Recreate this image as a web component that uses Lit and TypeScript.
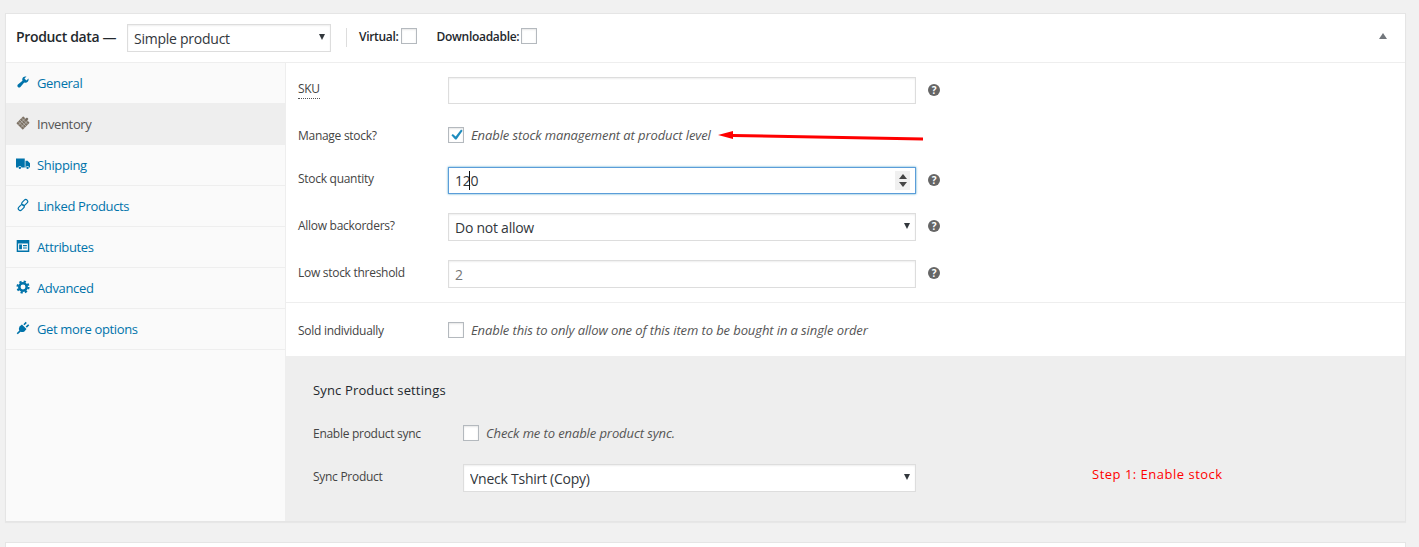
import { LitElement, css, html, svg } from "lit";
import { customElement } from "lit/decorators.js";

interface Tab {
  label: string;
  icon: unknown;
  active?: boolean;
}

const wrench = svg`<path d="M16.68 9.77c-1.34 1.34-3.3 1.67-4.95.99l-5.41 6.52c-.99.99-2.59.99-3.58 0s-.99-2.59 0-3.57l6.52-5.42c-.68-1.65-.35-3.61.99-4.95 1.28-1.28 3.12-1.62 4.72-1.06l-2.89 2.89 2.82 2.82 2.86-2.87c.53 1.58.18 3.39-1.08 4.67z"/>`;
const tag = svg`<g transform="rotate(45 10 10)"><rect x="3.500" y="3" width="13" height="14" rx="1" fill="#7d7264"/><path d="M3.500 6.500h13M3.500 10h13M3.500 13.500h13M7.500 3v14M12.500 3v14" stroke="#d8d8d8" stroke-width=".7"/><rect x="8.500" y=".5" width="3" height="3" fill="#6b6257"/></g>`;
const truck = svg`<path d="M0 2h12.500v13H7.800a2.300 2.300 0 0 0-4.600 0H0zM13.500 5.500h3L20 9v6h-1.200a2.300 2.300 0 0 0-4.600 0h-.7z"/><circle cx="5.500" cy="15.500" r="1.700"/><circle cx="16.500" cy="15.500" r="1.700"/>`;
const link = svg`<g fill="none" stroke="currentColor" stroke-width="1.700"><rect x="9.700" y="1.600" width="5.600" height="9.600" rx="2.800" transform="rotate(45 12.500 6.400)"/><rect x="4.700" y="8.800" width="5.600" height="9.600" rx="2.800" transform="rotate(45 7.500 13.600)"/></g>`;
const attrs = svg`<path fill-rule="evenodd" d="M1 1.500h18v17H1zM3 6.500v10h14v-10z"/><path d="M4.500 8h4v6.500h-4zM10 8.500h5.500v1.700H10zM10 12h5.500v1.700H10z"/>`;
const gear = svg`<circle cx="10" cy="10" r="5.300" fill="none" stroke="currentColor" stroke-width="3.600"/><circle cx="10" cy="10" r="7.900" fill="none" stroke="currentColor" stroke-width="3" stroke-dasharray="3.200 3"/>`;
const plug = svg`<path d="M8.500 5 L15 11.500 L12 15 Q9 16.500 6.500 15.200 L2.500 19 L1 17.500 L4.800 13.500 Q3.500 11 5 8zM10.500 4.500 L13.800 1 L15.500 2.700 L12.200 6.200zM13.800 7.800 L17.300 4.500 L19 6.200 L15.500 9.500z"/>`;

const TABS: Tab[] = [
  { label: "General", icon: wrench },
  { label: "Inventory", icon: tag, active: true },
  { label: "Shipping", icon: truck },
  { label: "Linked Products", icon: link },
  { label: "Attributes", icon: attrs },
  { label: "Advanced", icon: gear },
  { label: "Get more options", icon: plug },
];

@customElement("app-root")
export class AppRoot extends LitElement {
  static styles = css`
    :host {
      display: block;
      height: 547px;
      overflow: hidden;
      position: relative;
      background: #f1f1f1;
      font-family: "Open Sans", sans-serif;
      font-size: 12px;
      letter-spacing: -0.28px;
      color: #444;
    }
    * {
      box-sizing: border-box;
    }
    .panel {
      margin: 13px 13px 0 5px;
      height: 509px;
      background: #fff;
      border: 1px solid #e5e5e5;
      box-shadow: 0 1px 1px rgba(0, 0, 0, 0.04);
      display: flex;
      flex-direction: column;
    }
    .next {
      margin: 20px 13px 0 5px;
      height: 20px;
      background: #fff;
      border: 1px solid #e5e5e5;
    }
    .head {
      height: 49px;
      flex: none;
      border-bottom: 1px solid #eee;
      display: flex;
      align-items: center;
      padding: 0 0 4px 10px;
      color: #23282d;
    }
    .title {
      font-size: 14px;
      font-weight: 600;
      letter-spacing: -0.35px;
      width: 111px;
      flex: none;
    }
    .field.type {
      width: 204px;
      margin-top: 4px;
    }
    .sep {
      width: 1px;
      height: 19px;
      margin: 3px 12px 0 15px;
      background: #ddd;
    }
    .opt {
      font-weight: 600;
      letter-spacing: -0.3px;
      display: flex;
      align-items: center;
      gap: 2px;
      margin-right: 20px;
    }
    .collapse {
      margin-left: auto;
      margin-right: 18px;
      width: 0;
      height: 0;
      border-left: 4.500px solid transparent;
      border-right: 4.500px solid transparent;
      border-bottom: 6px solid #72777c;
    }
    .body {
      flex: 1;
      display: flex;
      min-height: 0;
    }
    .tabs {
      width: 280px;
      flex: none;
      background: #fafafa;
      border-right: 1px solid #eee;
      margin: 0;
      padding: 0;
      list-style: none;
    }
    .tab {
      height: 41px;
      border-bottom: 1px solid #eee;
      display: flex;
      align-items: center;
      padding: 0 0 0 10px;
      color: #0073aa;
      font-size: 13px;
      letter-spacing: -0.35px;
    }
    .tab.active {
      background: #eee;
      color: #555;
    }
    .tab svg {
      width: 14px;
      height: 14px;
      margin: -3px 7px 0 0;
      fill: #0073aa;
      color: #0073aa;
      flex: none;
    }
    .tab.active svg {
      fill: #777;
    }
    .main {
      flex: 1;
      display: flex;
      flex-direction: column;
      min-width: 0;
    }
    .group {
      padding: 14px 0 14px 12px;
      border-bottom: 1px solid #eee;
      display: flex;
      flex-direction: column;
    }
    .single {
      height: 53px;
      padding: 0 0 0 12px;
      display: flex;
      flex-direction: column;
      justify-content: center;
    }
    .row {
      display: flex;
      align-items: center;
    }
    .row + .row {
      margin-top: 19px;
    }
    .row.check {
      height: 16px;
    }
    .group .row.check {
      margin-top: 23px;
    }
    .group .row.check + .row {
      margin-top: 24px;
    }
    .lbl {
      width: 150px;
      flex: none;
      padding-bottom: 4px;
      color: #444;
    }
    .lbl.plain {
      padding: 1px 0 0;
    }
    .lbl span {
      border-bottom: 1px dotted #555;
      padding-bottom: 1px;
    }
    .field {
      position: relative;
      width: 468px;
      flex: none;
    }
    .field.sync-select {
      width: 453px;
    }
    .wide {
      display: block;
      width: 100%;
      height: 27px;
      margin: 0;
      padding: 0 6px;
      background: #fff;
      border: 1px solid #ddd;
      border-radius: 0;
      box-shadow: inset 0 1px 2px rgba(0, 0, 0, 0.07);
      font: 14px "Open Sans", sans-serif;
      letter-spacing: -0.25px;
      color: #32373c;
      outline: none;
      appearance: none;
    }
    select.wide {
      height: 28px;
    }
    .muted {
      height: 28px;
      color: #777;
    }
    .focus {
      border-color: #5b9dd9;
      box-shadow: 0 0 2px rgba(30, 140, 190, 0.8);
    }
    .arrow {
      position: absolute;
      right: 6px;
      top: 10px;
      width: 0;
      height: 0;
      border-left: 3.500px solid transparent;
      border-right: 3.500px solid transparent;
      border-top: 6px solid #32373c;
      pointer-events: none;
    }
    .spin {
      position: absolute;
      right: 6px;
      top: 4px;
      width: 15px;
      height: 19px;
      background: #f0f0f0;
      display: flex;
      flex-direction: column;
      align-items: center;
      justify-content: center;
      gap: 3px;
    }
    .spin i {
      width: 0;
      height: 0;
      border-left: 4px solid transparent;
      border-right: 4px solid transparent;
    }
    .spin i:first-child {
      border-bottom: 5px solid #444;
    }
    .spin i:last-child {
      border-top: 5px solid #444;
    }
    .caret {
      position: absolute;
      left: 21px;
      top: 4px;
      width: 1px;
      height: 19px;
      background: #111;
    }
    .help {
      width: 12px;
      height: 12px;
      margin: 0 0 2px 12px;
      border-radius: 50%;
      background: #666;
      color: #fff;
      font: 700 10px/12px "Open Sans", sans-serif;
      text-align: center;
      flex: none;
    }
    .box {
      display: inline-block;
      position: relative;
      width: 16px;
      height: 16px;
      background: #fff;
      border: 1px solid #b4b9be;
      box-shadow: inset 0 1px 2px rgba(0, 0, 0, 0.1);
      flex: none;
    }
    .box svg {
      position: absolute;
      left: -1px;
      top: -2px;
      width: 17px;
      height: 17px;
      fill: #1e8cbe;
    }
    .desc {
      margin-left: 7px;
      font-size: 13px;
      letter-spacing: -0.1px;
      font-style: italic;
      color: #555;
    }
    .sync {
      flex: 1;
      background: #eee;
      padding: 26px 0 0 27px;
    }
    .sync h4 {
      margin: 0 0 27px;
      font-size: 13px;
      line-height: 16px;
      letter-spacing: 0.15px;
      font-weight: 400;
      color: #23282d;
    }
    .sync .row + .row {
      margin-top: 23px;
    }
    .step {
      margin-left: 176px;
      padding-bottom: 8px;
      font-size: 13px;
      letter-spacing: 0.5px;
      color: #f00;
    }
    .annot {
      position: absolute;
      left: 715px;
      top: 125px;
      pointer-events: none;
    }
  `;

  private renderTab(t: Tab) {
    return html`<li class="tab ${t.active ? "active" : ""}">
      <svg viewBox="0 0 20 20">${t.icon}</svg>${t.label}
    </li>`;
  }

  private renderSelect(value: string, cls = "") {
    return html`<div class="field ${cls}">
      <select class="wide"><option>${value}</option></select>
      <span class="arrow"></span>
    </div>`;
  }

  render() {
    return html`
      <div class="panel">
        <div class="head">
          <span class="title">Product data —</span>
          ${this.renderSelect("Simple product", "type")}
          <span class="sep"></span>
          <label class="opt">Virtual: <span class="box"></span></label>
          <label class="opt">Downloadable: <span class="box"></span></label>
          <span class="collapse"></span>
        </div>
        <div class="body">
          <ul class="tabs">${TABS.map((t) => this.renderTab(t))}</ul>
          <div class="main">
            <div class="group">
              <div class="row">
                <div class="lbl"><span>SKU</span></div>
                <div class="field"><input class="wide" /></div>
                <div class="help">?</div>
              </div>
              <div class="row check">
                <div class="lbl plain">Manage stock?</div>
                <span class="box">
                  <svg viewBox="0 0 20 20"><path d="M15.400 4.200l1.800 1.300-7.200 10.300H8.500L4 11l1.700-1.600 3.300 3z"/></svg>
                </span>
                <span class="desc">Enable stock management at product level</span>
              </div>
              <div class="row">
                <div class="lbl">Stock quantity</div>
                <div class="field">
                  <input class="wide focus" value="120" />
                  <span class="caret"></span>
                  <span class="spin"><i></i><i></i></span>
                </div>
                <div class="help">?</div>
              </div>
              <div class="row">
                <div class="lbl">Allow backorders?</div>
                ${this.renderSelect("Do not allow")}
                <div class="help">?</div>
              </div>
              <div class="row">
                <div class="lbl">Low stock threshold</div>
                <div class="field"><input class="wide muted" value="2" /></div>
                <div class="help">?</div>
              </div>
            </div>
            <div class="single">
              <div class="row check">
                <div class="lbl plain">Sold individually</div>
                <span class="box"></span>
                <span class="desc">Enable this to only allow one of this item to be bought in a single order</span>
              </div>
            </div>
            <div class="sync">
              <h4>Sync Product settings</h4>
              <div class="row check">
                <div class="lbl plain">Enable product sync</div>
                <span class="box"></span>
                <span class="desc">Check me to enable product sync.</span>
              </div>
              <div class="row">
                <div class="lbl">Sync Product</div>
                ${this.renderSelect("Vneck Tshirt (Copy)", "sync-select")}
                <span class="step">Step 1: Enable stock</span>
              </div>
            </div>
          </div>
        </div>
      </div>
      <div class="next"></div>
      <svg class="annot" width="215" height="22" viewBox="0 0 215 22">
        <path d="M3 10 L18 6 L18 9 L208 12.500 L208 15.500 L18 12 L18 14 Z" fill="#f00" />
      </svg>
    `;
  }
}
